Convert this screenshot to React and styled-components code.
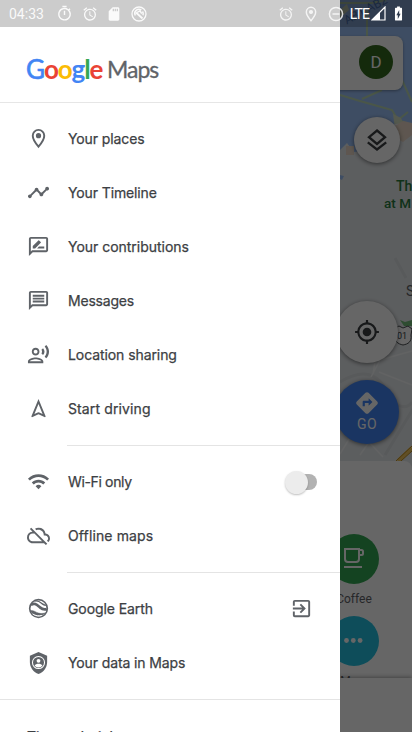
import React from "react";
import styled, { createGlobalStyle } from "styled-components";
import {
  MdTimeline, MdOutlineRateReview, MdOutlineMessage, MdOutlineRecordVoiceOver,
  MdOutlineNavigation, MdWifi, MdOutlineCloudOff, MdExitToApp, MdMyLocation,
  MdDirections, MdOutlineTimer, MdAlarm, MdSdCard, MdBatteryChargingFull,
} from "react-icons/md";

const GlobalStyle = createGlobalStyle`
  * { box-sizing: border-box; }
  body { margin: 0; overflow: hidden; font-family: Roboto, sans-serif; }
`;

const Screen = styled.main`
  position: relative;
  width: 412px;
  height: 732px;
  overflow: hidden;
  background: #e7ebee;
`;

/* ---------- map canvas ---------- */
const MapArt = styled.svg`
  position: absolute;
  left: 340px;
  top: 0;
`;
const MapLabel = styled.div`
  position: absolute;
  left: ${(p) => p.$x}px;
  top: ${(p) => p.$y}px;
  color: ${(p) => p.$color};
  font-size: ${(p) => p.$size}px;
  line-height: 16px;
  font-weight: ${(p) => p.$weight || 400};
  transform: rotate(${(p) => p.$turn || 0}deg);
  white-space: nowrap;
`;
const SearchCard = styled.div`
  position: absolute;
  left: 9px;
  top: 36px;
  width: 394px;
  height: 54px;
  padding: 0 10px 2px 0;
  display: flex;
  align-items: center;
  justify-content: flex-end;
  border-radius: 8px;
  background: #fff;
  box-shadow: 0 1px 3px rgba(0, 0, 0, 0.35);
`;
const Avatar = styled.div`
  width: 34px;
  height: 34px;
  border-radius: 50%;
  display: grid;
  place-items: center;
  background: #33691e;
  color: #fff;
  font-size: 17px;
`;
const Fab = styled.div`
  position: absolute;
  left: ${(p) => p.$cx - p.$size / 2}px;
  top: ${(p) => p.$cy - p.$size / 2}px;
  width: ${(p) => p.$size}px;
  height: ${(p) => p.$size}px;
  border-radius: 50%;
  display: flex;
  flex-direction: column;
  align-items: center;
  justify-content: center;
  background: ${(p) => p.$bg || "#fff"};
  color: ${(p) => p.$color || "#3c4043"};
  box-shadow: 0 1px 4px rgba(0, 0, 0, 0.5);
  font-size: 14px;
  line-height: 16px;
`;
const Go = styled.span`
  margin-bottom: 3px;
  letter-spacing: 0.4px;
`;
const Sheet = styled.section`
  position: absolute;
  left: 0;
  top: 461px;
  width: 412px;
  height: 217px;
  padding: 73px 33px 0 0;
  display: flex;
  flex-direction: column;
  align-items: flex-end;
  border-radius: 8px 8px 0 0;
  background: #fff;
  overflow: hidden;
`;
const Category = styled.div`
  width: 50px;
  height: 82px;
  flex: none;
  display: flex;
  flex-direction: column;
  align-items: center;
  gap: 7px;
  color: #5f6368;
  font-size: 12px;
  line-height: 16px;
`;
const Disc = styled.div`
  width: 50px;
  height: 50px;
  flex: none;
  display: grid;
  place-items: center;
  border-radius: 50%;
  background: ${(p) => p.$bg};
`;
const BottomBar = styled.div`
  position: absolute;
  left: 0;
  bottom: 0;
  width: 412px;
  height: 54px;
  background: #fff;
  box-shadow: 0 -1px 4px rgba(0, 0, 0, 0.35);
`;
const Scrim = styled.div`
  position: absolute;
  inset: 0;
  background: rgba(0, 0, 0, 0.6);
`;

/* ---------- drawer ---------- */
const Drawer = styled.nav`
  position: absolute;
  left: 0;
  top: 0;
  width: 340px;
  height: 732px;
  overflow: hidden;
  background: #fff;
  color: #3c4043;
  font-family: Inter, sans-serif;
`;
const Header = styled.header`
  height: 103px;
  padding: 54px 0 0 26px;
  display: flex;
  border-bottom: 1px solid #e6e6e6;
`;
const Brand = styled.div`
  display: flex;
  width: 81px;
  font-family: Lato, sans-serif;
  font-size: 26px;
  line-height: 31px;
  letter-spacing: -1.1px;
  font-weight: 700;
`;
const Letter = styled.span`
  color: ${(p) => p.$color};
  font-weight: ${(p) => p.$weight || 700};
  -webkit-text-stroke: ${(p) => (p.$weight ? 0.6 : 0)}px ${(p) => p.$color};
`;
const Product = styled.div`
  font-family: Lato, sans-serif;
  font-size: 23px;
  line-height: 31px;
  letter-spacing: -1px;
  color: #5f6368;
  -webkit-text-stroke: 0.3px #5f6368;
`;
const Group = styled.div`
  padding: 9px 0;
`;
const Divider = styled.div`
  height: 1px;
  margin-left: ${(p) => (p.$inset ? 67 : 0)}px;
  background: #e4e4e4;
`;
const Row = styled.div`
  height: 54px;
  padding: 0 23px 0 27px;
  display: flex;
  align-items: center;
`;
const RowIcon = styled.span`
  width: 23px;
  height: 24px;
  margin-right: 18px;
  display: flex;
  align-items: flex-start;
  color: #5f6368;
`;
const Label = styled.span`
  flex: 1;
  font-size: 14px;
  line-height: 20px;
  font-weight: 400;
  letter-spacing: ${(p) => p.$track || 0}px;
  -webkit-text-stroke: 0.25px currentColor;
  white-space: nowrap;
`;
const Trail = styled.span`
  margin: 0 4px 1px 0;
  display: flex;
  color: #5f6368;
`;
const Toggle = styled.span`
  width: 30px;
  height: 16px;
  display: flex;
  align-items: center;
  border-radius: 8px;
  background: #b2b2b2;
`;
const Knob = styled.span`
  width: 23px;
  height: 23px;
  flex: none;
  margin-left: -2px;
  border-radius: 50%;
  background: #ececec;
  box-shadow: 0 1px 2px rgba(0, 0, 0, 0.25);
`;
const Tips = styled.div`
  padding: 27px 0 0 27px;
  display: flex;
`;

/* ---------- status bar ---------- */
const StatusBar = styled.div`
  position: absolute;
  left: 0;
  top: 0;
  width: 412px;
  height: 27px;
  padding: 0 5px 0 9px;
  display: flex;
  align-items: center;
  background: rgba(0, 0, 0, 0.2);
  color: #fff;
  font-size: 14px;
`;
const Clock = styled.span`
  width: 47px;
  opacity: 0.9;
`;
const StatusGroup = styled.div`
  display: flex;
  align-items: center;
  gap: ${(p) => p.$gap}px;
  opacity: ${(p) => p.$fade || 1};
  margin-left: ${(p) => p.$left || 0};
`;
const Network = styled.span`
  margin: 0 2px 0 6px;
  font-size: 14px;
  letter-spacing: -0.9px;
`;

const EarthIcon = () => (
  <svg width="23" height="23" viewBox="0 0 24 24" fill="none" stroke="currentColor">
    <circle cx="12" cy="12" r="9.2" strokeWidth="1.7" />
    <path d="M4 8.500C7.500 5.200 10.500 8.300 13.500 10.800c2.200 1.800 4.500 2.700 7.200 1.600" strokeWidth="2.800" />
    <path d="M8 4.200c4-.8 6 1.300 8 3 1.200 1 2.400 1.500 3.700 1.300" strokeWidth="1.500" />
    <path fill="currentColor" d="M3.300 14.200c3.300-.8 5.700 1.800 8.800 2.600 2.500.7 4.600.5 7.300-.3-4.400 4.600-12.500 4.500-16.100-2.300z" strokeWidth=".5" />
    <path stroke="#fff" strokeWidth="1" d="M6 17.800c3 1.900 6.500 2.300 9.500 1.400" />
  </svg>
);
const ShieldIcon = () => (
  <svg width="23" height="24" viewBox="0 0 24 24">
    <path fill="currentColor" d="M12 .5 3 4.400v6.500c0 5.700 3.800 10.800 9 12.600 5.200-1.800 9-6.900 9-12.600V4.400z" />
    <circle cx="12" cy="11.500" r="6.300" fill="none" stroke="#fff" strokeWidth="1.100" />
    <circle cx="12" cy="9.700" r="2" fill="#fff" />
    <path fill="#fff" d="M7.900 14.700c1.600-2.500 6.600-2.500 8.200 0-2 2.700-6.200 2.700-8.200 0z" />
  </svg>
);
const SyncOffIcon = () => (
  <svg width="16" height="16" viewBox="0 0 16 16" fill="none" stroke="#fff">
    <circle cx="8" cy="8" r="7" strokeWidth="1.300" />
    <path d="m5 6.500 6.500 6" strokeWidth="1.800" />
    <path d="M4.300 9.500a4.200 4.200 0 0 1 6-5.500M11.500 5.500a4.200 4.200 0 0 1 .5 3.800" strokeWidth="1.500" />
    <path d="m6 6.500 3-1.700 1.700 2.900" strokeWidth="1.400" />
  </svg>
);
const DndIcon = () => (
  <svg width="16" height="16" viewBox="0 0 16 16" fill="none" stroke="#fff" strokeWidth="1.500">
    <circle cx="8" cy="8" r="6.600" />
    <path d="M4.500 8h7" />
  </svg>
);
const SignalIcon = () => (
  <svg width="15" height="15" viewBox="0 0 15 15">
    <path d="M1 14 14 1v13z" fill="none" stroke="#fff" strokeWidth="1.200" />
    <path d="M1 14 9 6v8z" fill="#fff" />
  </svg>
);
const LocationDot = () => (
  <svg width="16" height="16" viewBox="0 0 24 24" fill="none" stroke="#fff" strokeWidth="2.200">
    <path d="M12 2a7 7 0 0 0-7 7c0 5 7 13 7 13s7-8 7-13a7 7 0 0 0-7-7z" />
    <circle cx="12" cy="9" r="2" fill="#fff" />
  </svg>
);
const PlaceIcon = () => (
  <svg width="23" height="23" viewBox="0 0 24 24" fill="none" stroke="currentColor" strokeWidth="2">
    <path d="M12 3a6 6 0 0 0-6 6c0 4.300 6 11.500 6 11.500S18 13.300 18 9a6 6 0 0 0-6-6z" />
    <circle cx="12" cy="9" r="2.700" fill="currentColor" stroke="none" />
  </svg>
);
const LayersIcon = () => (
  <svg width="24" height="24" viewBox="0 0 24 24" fill="none" stroke="currentColor" strokeWidth="2.300">
    <path d="m12 2.500 8 6.700-8 6.700-8-6.700zM2.800 14.300l9.200 7.200 9.200-7.200" />
  </svg>
);
const CoffeeIcon = () => (
  <svg width="24" height="24" viewBox="0 0 24 24" fill="none" stroke="#fff" strokeWidth="2">
    <path d="M3 2h14v10a3 3 0 0 1-3 3H6a3 3 0 0 1-3-3zM17 3h2.500A1.500 1.500 0 0 1 21 4.500v2A1.500 1.500 0 0 1 19.500 8H17M2 20h18" />
  </svg>
);
const DotsIcon = () => (
  <svg width="20" height="8" viewBox="0 0 20 8" fill="#fff">
    <circle cx="2.500" cy="3.500" r="2.400" />
    <circle cx="9.300" cy="3.500" r="2.400" />
    <circle cx="16.100" cy="3.500" r="2.400" />
  </svg>
);

const GROUPS = [
  [
    { text: "Your places", icon: <PlaceIcon />, track: -0.1 },
    { text: "Your Timeline", icon: <MdTimeline size={23} />, track: -0.12 },
    { text: "Your contributions", icon: <MdOutlineRateReview size={23} />, track: -0.02 },
    { text: "Messages", icon: <MdOutlineMessage size={23} />, track: -0.2 },
    { text: "Location sharing", icon: <MdOutlineRecordVoiceOver size={23} />, track: -0.08 },
    { text: "Start driving", icon: <MdOutlineNavigation size={23} />, track: 0.12 },
  ],
  [
    { text: "Wi-Fi only", icon: <MdWifi size={23} />, track: -0.35, trail: "toggle" },
    { text: "Offline maps", icon: <MdOutlineCloudOff size={23} />, track: 0.12 },
  ],
  [
    { text: "Google Earth", icon: <EarthIcon />, track: -0.08, trail: "exit" },
    { text: "Your data in Maps", icon: <ShieldIcon />, track: -0.12 },
  ],
];

const MapBackground = () => (
  <MapArt width="72" height="732" viewBox="0 0 72 732" fill="none">
    <path fill="#9cc1f8" d="M0 0h72v124l-12-2-10 8-8 18-28 4-7-9-7 7z" />
    <path stroke="#b9d8b5" strokeWidth="2" d="M0 3h32l14-3M27 10v27M0 95l20 6 32 9 6 10 14 5M22 99l20-9M62 80l10 22M58 120l10-8" />
    <path fill="#d3dfc4" d="m0 10 7-6 2 6-9 8zM53 114l8 4 4 9-10 2z" />
    <path fill="#e7ebee" d="M46 128c8-7 19-4 26 0v20H40z" />
    <path fill="#ead8c7" d="m55 126 8-5 9 2v12l-9 7-13-7z" />
    <path fill="#ead8c7" d="M6 146h8v9H6z" />
    <path fill="#9cc1f8" d="M0 175l4 1-2 4-2-1z" />
    <path stroke="#dce0e3" strokeWidth="3" d="m55 258 11 20M45 455l28-46M0 382c25-15 39-7 47 10 5 12 18 20 25 10" />
    <path stroke="#f5f7f8" strokeWidth="1.500" d="m31 377 9-17 32-9M39 372l33 13M0 454l11-18M20 455l9-13 14 15M35 362l-2 12" />
    <path stroke="#f3c65c" strokeWidth="4" d="m58 461 14-13" />
    <path stroke="#be8c20" strokeWidth="1" d="m56 461 16-15M61 461l11-10" />
    <path fill="#73bd7b" d="m60 320 5 2 7-2v6h-8z" />
    <path fill="#fff" stroke="#494d51" d="m55 328 4-2 4 2 5-2 4 3-1 6c1 7-3 9-8 10-5-1-9-4-8-9z" />
  </MapArt>
);

const LOGO = [["G", "#4285f4", 400], ["o", "#ea4335"], ["o", "#fbbc04"], ["g", "#4285f4"], ["l", "#34a853"], ["e", "#ea4335"]];

export default function App() {
  return (
    <Screen>
      <GlobalStyle />
      <MapBackground />
      <MapLabel $x={342} $y={2} $size={12} $color="#5480c6" $turn={-28}>AB1 AB2</MapLabel>
      <MapLabel $x={396} $y={178} $size={14} $color="#287b40" $weight={500}>Th</MapLabel>
      <MapLabel $x={384} $y={195} $size={13.5} $color="#287b40" $weight={500}>at M</MapLabel>
      <MapLabel $x={406} $y={283} $size={14} $color="#5f6368">S</MapLabel>
      <MapLabel $x={397} $y={328} $size={9} $color="#3c4043">01</MapLabel>
      <SearchCard><Avatar>D</Avatar></SearchCard>
      <Fab $cx={377} $cy={140} $size={46}><LayersIcon /></Fab>
      <Fab $cx={367} $cy={332} $size={62}><MdMyLocation size={26} /></Fab>
      <Fab $cx={367} $cy={412} $size={64} $bg="#4285f4" $color="#fff">
        <MdDirections size={26} />
        <Go>GO</Go>
      </Fab>
      <Sheet>
        <Category><Disc $bg="#34a853"><CoffeeIcon /></Disc>Coffee</Category>
        <Category><Disc $bg="#24c1e0"><DotsIcon /></Disc>More</Category>
      </Sheet>
      <BottomBar />
      <Scrim />
      <Drawer>
        <Header>
          <Brand>{LOGO.map(([c, color, weight], i) => <Letter key={i} $color={color} $weight={weight}>{c}</Letter>)}</Brand>
          <Product>Maps</Product>
        </Header>
        {GROUPS.map((rows, g) => (
          <React.Fragment key={g}>
            <Group>
              {rows.map((row) => (
                <Row key={row.text}>
                  <RowIcon>{row.icon}</RowIcon>
                  <Label $track={row.track}>{row.text}</Label>
                  {row.trail === "toggle" && <Toggle><Knob /></Toggle>}
                  {row.trail === "exit" && <Trail><MdExitToApp size={23} /></Trail>}
                </Row>
              ))}
            </Group>
            <Divider $inset={g < 2} />
          </React.Fragment>
        ))}
        <Tips><Label $track={0}>Tips and tricks</Label></Tips>
      </Drawer>
      <StatusBar>
        <Clock>04:33</Clock>
        <StatusGroup $gap={8.5} $fade={0.9}>
          <MdOutlineTimer size={17} />
          <MdAlarm size={16} />
          <MdSdCard size={16} />
          <SyncOffIcon />
        </StatusGroup>
        <StatusGroup $gap={9} $fade={0.8} $left="auto">
          <MdAlarm size={16} />
          <LocationDot />
          <DndIcon />
        </StatusGroup>
        <Network>LTE</Network>
        <StatusGroup $gap={4}>
          <SignalIcon />
          <MdBatteryChargingFull size={17} />
        </StatusGroup>
      </StatusBar>
    </Screen>
  );
}
